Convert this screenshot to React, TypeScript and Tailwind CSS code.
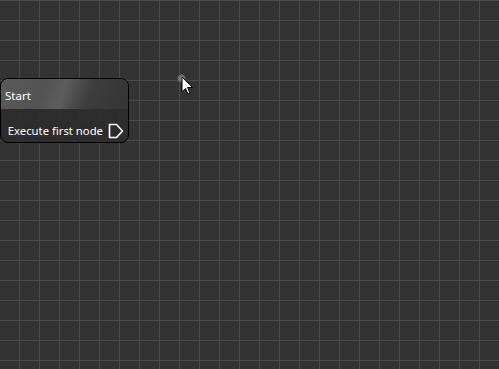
export default function App() {
  return (
    <div className="relative h-[369px] w-[499px] overflow-hidden bg-[#333333] bg-[linear-gradient(to_right,#4b4b4b_1px,transparent_1px),linear-gradient(to_bottom,#4b4b4b_1px,transparent_1px)] bg-[size:20px_20px] bg-[position:19px_0px] font-['Noto_Sans',sans-serif] text-white">
      {/* node */}
      <div className="absolute left-0 top-[78px] flex h-[65px] w-[129px] flex-col overflow-hidden rounded-[8px] border-[1.5px] border-black bg-[#2d2d2d]/95">
        <div className="relative flex h-[30px] items-center bg-[linear-gradient(110deg,#5a5a5a_0%,#535353_35%,#5e5e5e_48%,#3e3e3e_68%,#343434_100%)] px-[4px] pt-[3px]">
          <span className="text-[11.5px] leading-none">Start</span>
        </div>
        <div className="flex flex-1 items-center justify-end gap-[5px] pr-[4px] pt-[11px]">
          <span className="text-[11.3px] leading-none">Execute first node</span>
          <svg width="16" height="16" viewBox="0 0 16 16" className="shrink-0">
            <path d="M1.5 1.5 H8.5 L14.5 8 L8.5 14.5 H1.5 Z" fill="none" stroke="white" strokeWidth="1.6" strokeLinejoin="round" />
          </svg>
        </div>
      </div>

      {/* mouse cursor */}
      <div className="absolute left-[177px] top-[74px] h-[9px] w-[9px] rounded-full bg-[radial-gradient(circle,#9a9a9a_0%,#6a6a6a_50%,transparent_75%)]" />
      <svg className="absolute left-[181px] top-[76px]" width="13" height="20" viewBox="0 0 13 20">
        <path d="M1 1 V16 L4.5 12.5 L7 18 L9 17 L6.5 11.5 H11.5 Z" fill="white" stroke="black" strokeWidth="1" strokeLinejoin="miter" />
      </svg>
    </div>
  );
}
